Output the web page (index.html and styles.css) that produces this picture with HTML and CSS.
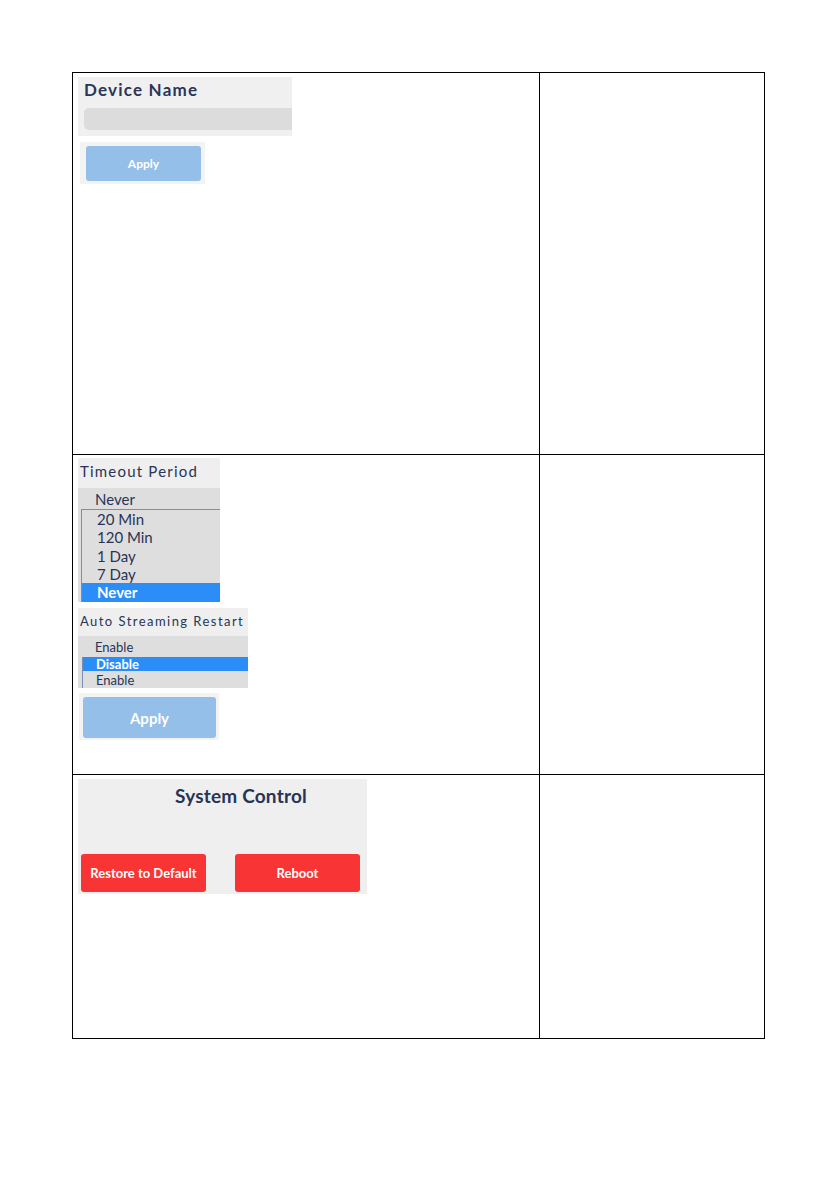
FILE: index.html
```html
<!DOCTYPE html>
<html>
<head>
<meta charset="utf-8">
<link rel="stylesheet" href="styles.css">
</head>
<body>
<div class="page">
  <div class="table">
    <div class="cell left row1">
      <div class="panel name-panel">
        <div class="label name-label">Device Name</div>
        <div class="name-input"></div>
      </div>
      <div class="btn-frame frame1"><div class="btn apply apply1">Apply</div></div>
    </div>
    <div class="cell right row1"></div>

    <div class="cell left row2">
      <div class="timeout">
        <div class="panel-title timeout-title">Timeout Period</div>
        <div class="select timeout-select">
          <div class="current timeout-current">Never</div>
          <div class="list timeout-list">
            <div class="opt t-opt">20 Min</div>
            <div class="opt t-opt">120 Min</div>
            <div class="opt t-opt">1 Day</div>
            <div class="opt t-opt">7 Day</div>
            <div class="opt t-opt t-sel">Never</div>
          </div>
        </div>
      </div>
      <div class="stream">
        <div class="panel-title stream-title">Auto Streaming Restart</div>
        <div class="select stream-select">
          <div class="current stream-current">Enable</div>
          <div class="list stream-list">
            <div class="opt s-opt s-sel">Disable</div>
            <div class="opt s-opt s-last">Enable</div>
          </div>
        </div>
      </div>
      <div class="btn-frame frame2"><div class="btn apply apply2">Apply</div></div>
    </div>
    <div class="cell right row2"></div>

    <div class="cell left row3">
      <div class="sys">
        <div class="sys-title">System Control</div>
        <div class="sys-buttons">
          <div class="btn red">Restore to Default</div>
          <div class="btn red">Reboot</div>
        </div>
      </div>
    </div>
    <div class="cell right row3"></div>
  </div>
</div>
</body>
</html>
```
FILE: styles.css
```css
* { box-sizing: border-box; }
html, body { margin: 0; padding: 0; background: #fff; }
body { font-family: "Lato", "Open Sans", sans-serif; color: #283456; }
.page { padding: 72px 0 0 72px; }
.table {
  display: grid;
  grid-template-columns: 467px 225px;
  grid-template-rows: 382px 320px 264px;
  width: 693px;
  border-top: 1px solid #000;
  border-left: 1px solid #000;
}
.cell { border-right: 1px solid #000; border-bottom: 1px solid #000; }
.left { padding-left: 5px; }
.row1.left { padding-top: 4px; }
.row2.left { padding-top: 3px; }
.row3.left { padding-top: 4px; }

/* Device name */
.name-panel {
  width: 214px; height: 59px; background: #f0f0f0;
  padding: 3px 0 0 6px;
}
.name-label { font-size: 17px; font-weight: 700; letter-spacing: 1.2px; line-height: 20px; color: #2c3558; }
.name-input { margin-top: 8px; height: 22px; background: #dcdcdc; border-radius: 5px 0 0 5px; }

.btn-frame { background: #f3f3f3; }
.frame1 { margin: 6px 0 0 2px; width: 125px; height: 42px; padding: 4px 0 0 6px; }
.btn { display: flex; align-items: center; justify-content: center; color: #fff; border-radius: 3px; }
.apply { background: #93bfe8; }
.apply1 { width: 115px; height: 35px; font-size: 12px; font-weight: 700; }

/* Timeout */
.timeout { width: 142px; }
.panel-title { background: #efefef; color: #283456; }
.timeout-title { height: 30px; font-size: 15px; padding: 3px 0 0 2px; letter-spacing: 1.2px; line-height: 20px; }
.select { background: #dedede; }
.current { color: #283456; }
.timeout-current { height: 21px; font-size: 15px; padding: 2px 0 0 17px; line-height: 18px; }
.timeout-list { margin-left: 3px; border-top: 1px solid #7c8cb4; border-left: 1px solid #7c8cb4; }
.t-opt { height: 18.3px; font-size: 15px; line-height: 18px; padding-left: 15px; }
.t-sel { height: 19px; background: #2b8df7; color: #fff; font-weight: 700; }

/* Auto streaming */
.stream { width: 170px; margin-top: 6px; }
.stream-title { height: 28px; font-size: 13px; padding: 4px 0 0 2px; letter-spacing: 1.45px; line-height: 18px; white-space: nowrap; }
.stream-current { height: 21px; font-size: 13px; padding: 3px 0 0 17px; line-height: 16px; }
.stream-list { margin-left: 4px; border-left: 1px solid #7c8cb4; }
.s-opt { font-size: 13px; padding-left: 13px; line-height: 14px; }
.s-sel { height: 14px; background: #2b8df7; color: #fff; font-weight: 700; }
.s-last { height: 17px; padding-top: 2px; }
.frame2 { margin: 5px 0 0 1px; width: 140px; height: 47px; padding: 4px 0 0 4px; }
.apply2 { width: 133px; height: 41px; font-size: 15px; font-weight: 700; }

/* System control */
.sys { width: 289px; height: 115px; background: #efefef; padding: 5px 0 0 3px; display: flex; flex-direction: column; }
.sys-title { font-size: 19px; font-weight: 700; padding-left: 94px; line-height: 24px; letter-spacing: 0.2px; color: #283456; }
.sys-buttons { display: flex; gap: 29px; margin-top: 46px; }
.red { width: 125px; height: 38px; background: #f83434; font-size: 13px; font-weight: 700; }
```
